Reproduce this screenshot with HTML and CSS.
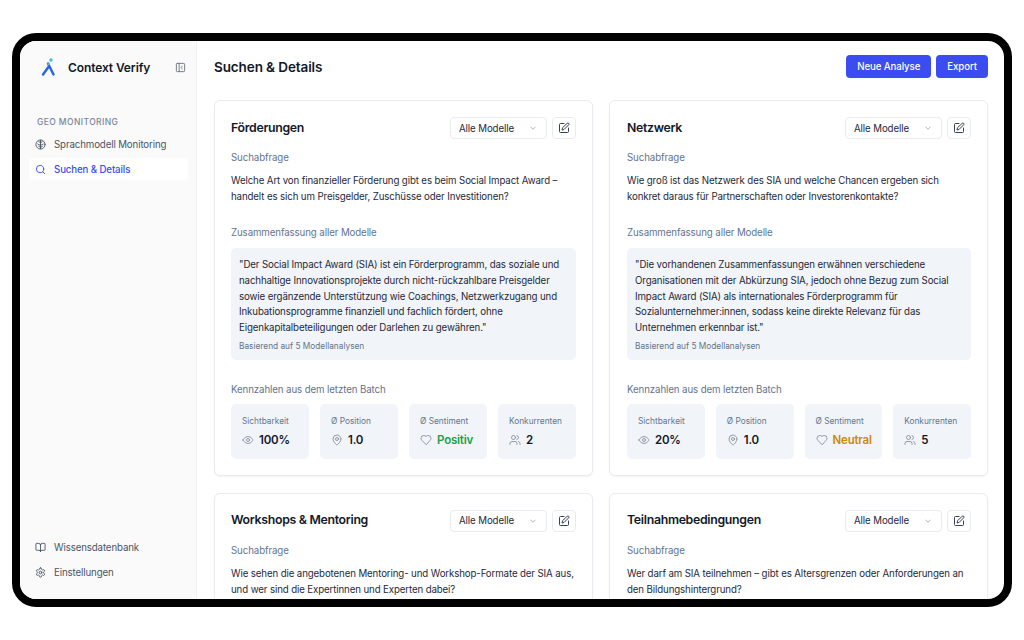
FILE: index.html
```html
<!DOCTYPE html>
<html lang="de">
<head>
  <meta charset="UTF-8" />
  <title>Context Verify</title>
  <link rel="stylesheet" href="styles.css">
</head>
<body>
  <div class="device">
    <aside class="sidebar">
      <div class="brand">
        <svg class="logo" viewBox="0 0 15 18" width="15" height="18">
          <path d="M7 5.500 L12.500 16.500 M7.800 8.500 L2 16.500" fill="none" stroke="#2563eb" stroke-width="2.400" stroke-linecap="round"/>
          <path d="M7 4.500 L8.300 7" fill="none" stroke="#60a5fa" stroke-width="2"/>
          <circle cx="10" cy="2" r="1.700" fill="#38bdf8"/>
        </svg>
        <span class="brand-name">Context Verify</span>
        <svg class="icon collapse" viewBox="0 0 24 24"><rect x="3" y="3" width="18" height="18" rx="2"/><path d="M9 3v18M16 15l-3-3 3-3"/></svg>
      </div>
      <div class="nav-title">GEO MONITORING</div>
      <nav class="nav">
        <a class="nav-item">
          <svg class="icon" viewBox="0 0 24 24"><circle cx="12" cy="12" r="10"/><path d="M12 3v18M12 8 8 6M12 8l4-2M12 14l-6-3M12 14l6-3M12 18l-4-2M12 18l4-2"/></svg>
          Sprachmodell Monitoring
        </a>
        <a class="nav-item active">
          <svg class="icon" viewBox="0 0 24 24"><circle cx="11" cy="11" r="8"/><path d="m21 21-4.300-4.300"/></svg>
          Suchen &amp; Details
        </a>
      </nav>
      <nav class="nav nav-bottom">
        <a class="nav-item">
          <svg class="icon" viewBox="0 0 24 24"><path d="M12 7v14M3 18a1 1 0 0 1-1-1V4a1 1 0 0 1 1-1h5a4 4 0 0 1 4 4 4 4 0 0 1 4-4h5a1 1 0 0 1 1 1v13a1 1 0 0 1-1 1h-6a3 3 0 0 0-3 3 3 3 0 0 0-3-3z"/></svg>
          Wissensdatenbank
        </a>
        <a class="nav-item">
          <svg class="icon" viewBox="0 0 24 24"><path d="M12.220 2h-.44a2 2 0 0 0-2 2v.18a2 2 0 0 1-1 1.730l-.43.25a2 2 0 0 1-2 0l-.15-.08a2 2 0 0 0-2.730.73l-.22.38a2 2 0 0 0 .73 2.730l.15.1a2 2 0 0 1 1 1.720v.51a2 2 0 0 1-1 1.740l-.15.09a2 2 0 0 0-.73 2.730l.22.38a2 2 0 0 0 2.730.73l.15-.08a2 2 0 0 1 2 0l.43.25a2 2 0 0 1 1 1.730V20a2 2 0 0 0 2 2h.44a2 2 0 0 0 2-2v-.18a2 2 0 0 1 1-1.730l.43-.25a2 2 0 0 1 2 0l.15.08a2 2 0 0 0 2.730-.73l.22-.39a2 2 0 0 0-.73-2.730l-.15-.08a2 2 0 0 1-1-1.740v-.5a2 2 0 0 1 1-1.740l.15-.09a2 2 0 0 0 .73-2.730l-.22-.38a2 2 0 0 0-2.730-.73l-.15.08a2 2 0 0 1-2 0l-.43-.25a2 2 0 0 1-1-1.730V4a2 2 0 0 0-2-2z"/><circle cx="12" cy="12" r="3"/></svg>
          Einstellungen
        </a>
      </nav>
    </aside>

    <main class="main">
      <header class="topbar">
        <h1>Suchen &amp; Details</h1>
        <div class="actions">
          <button class="btn">Neue Analyse</button>
          <button class="btn">Export</button>
        </div>
      </header>

      <div class="grid">
        <section class="card">
          <div class="card-head">
            <h2>Förderungen</h2>
            <div class="select">Alle Modelle<svg class="chev" viewBox="0 0 24 24"><path d="m6 9 6 6 6-6"/></svg></div>
            <button class="edit"><svg class="icon" viewBox="0 0 24 24"><path d="M12 3H5a2 2 0 0 0-2 2v14a2 2 0 0 0 2 2h14a2 2 0 0 0 2-2v-7"/><path d="M18.400 2.600a2.100 2.100 0 0 1 3 3L12 15l-4 1 1-4z"/></svg></button>
          </div>
          <div class="label">Suchabfrage</div>
          <p class="query">Welche Art von finanzieller Förderung gibt es beim Social Impact Award – handelt es sich um Preisgelder, Zuschüsse oder Investitionen?</p>
          <div class="label">Zusammenfassung aller Modelle</div>
          <div class="summary">
            <p>"Der Social Impact Award (SIA) ist ein Förderprogramm, das soziale und nachhaltige Innovationsprojekte durch nicht-rückzahlbare Preisgelder sowie ergänzende Unterstützung wie Coachings, Netzwerkzugang und Inkubationsprogramme finanziell und fachlich fördert, ohne Eigenkapitalbeteiligungen oder Darlehen zu gewähren."</p>
            <small>Basierend auf 5 Modellanalysen</small>
          </div>
          <div class="label">Kennzahlen aus dem letzten Batch</div>
          <div class="stats">
            <div class="stat"><span>Sichtbarkeit</span><b><svg class="icon" viewBox="0 0 24 24"><path d="M2 12s3.500-7 10-7 10 7 10 7-3.500 7-10 7-10-7-10-7z"/><circle cx="12" cy="12" r="3"/></svg>100%</b></div>
            <div class="stat"><span>Ø Position</span><b><svg class="icon" viewBox="0 0 24 24"><path d="M20 10c0 5-5.500 10.200-7.400 11.800a1 1 0 0 1-1.200 0C9.500 20.200 4 15 4 10a8 8 0 0 1 16 0"/><circle cx="12" cy="10" r="3"/></svg>1.0</b></div>
            <div class="stat"><span>Ø Sentiment</span><b class="green"><svg class="icon" viewBox="0 0 24 24"><path d="M19 14c1.500-1.500 3-3.200 3-5.500A5.500 5.500 0 0 0 16.500 3c-1.800 0-3 .5-4.500 2-1.500-1.500-2.700-2-4.500-2A5.500 5.500 0 0 0 2 8.500c0 2.300 1.500 4 3 5.500l7 7z"/></svg>Positiv</b></div>
            <div class="stat"><span>Konkurrenten</span><b><svg class="icon" viewBox="0 0 24 24"><path d="M16 21v-2a4 4 0 0 0-4-4H6a4 4 0 0 0-4 4v2"/><circle cx="9" cy="7" r="4"/><path d="M22 21v-2a4 4 0 0 0-3-3.900M16 3.100a4 4 0 0 1 0 7.800"/></svg>2</b></div>
          </div>
        </section>

        <section class="card">
          <div class="card-head">
            <h2>Netzwerk</h2>
            <div class="select">Alle Modelle<svg class="chev" viewBox="0 0 24 24"><path d="m6 9 6 6 6-6"/></svg></div>
            <button class="edit"><svg class="icon" viewBox="0 0 24 24"><path d="M12 3H5a2 2 0 0 0-2 2v14a2 2 0 0 0 2 2h14a2 2 0 0 0 2-2v-7"/><path d="M18.400 2.600a2.100 2.100 0 0 1 3 3L12 15l-4 1 1-4z"/></svg></button>
          </div>
          <div class="label">Suchabfrage</div>
          <p class="query">Wie groß ist das Netzwerk des SIA und welche Chancen ergeben sich konkret daraus für Partnerschaften oder Investorenkontakte?</p>
          <div class="label">Zusammenfassung aller Modelle</div>
          <div class="summary">
            <p>"Die vorhandenen Zusammenfassungen erwähnen verschiedene Organisationen mit der Abkürzung SIA, jedoch ohne Bezug zum Social Impact Award (SIA) als internationales Förderprogramm für Sozialunternehmer:innen, sodass keine direkte Relevanz für das Unternehmen erkennbar ist."</p>
            <small>Basierend auf 5 Modellanalysen</small>
          </div>
          <div class="label">Kennzahlen aus dem letzten Batch</div>
          <div class="stats">
            <div class="stat"><span>Sichtbarkeit</span><b><svg class="icon" viewBox="0 0 24 24"><path d="M2 12s3.500-7 10-7 10 7 10 7-3.500 7-10 7-10-7-10-7z"/><circle cx="12" cy="12" r="3"/></svg>20%</b></div>
            <div class="stat"><span>Ø Position</span><b><svg class="icon" viewBox="0 0 24 24"><path d="M20 10c0 5-5.500 10.200-7.400 11.800a1 1 0 0 1-1.200 0C9.500 20.200 4 15 4 10a8 8 0 0 1 16 0"/><circle cx="12" cy="10" r="3"/></svg>1.0</b></div>
            <div class="stat"><span>Ø Sentiment</span><b class="amber"><svg class="icon" viewBox="0 0 24 24"><path d="M19 14c1.500-1.500 3-3.200 3-5.500A5.500 5.500 0 0 0 16.500 3c-1.800 0-3 .5-4.500 2-1.500-1.500-2.700-2-4.500-2A5.500 5.500 0 0 0 2 8.500c0 2.300 1.500 4 3 5.500l7 7z"/></svg>Neutral</b></div>
            <div class="stat"><span>Konkurrenten</span><b><svg class="icon" viewBox="0 0 24 24"><path d="M16 21v-2a4 4 0 0 0-4-4H6a4 4 0 0 0-4 4v2"/><circle cx="9" cy="7" r="4"/><path d="M22 21v-2a4 4 0 0 0-3-3.900M16 3.100a4 4 0 0 1 0 7.800"/></svg>5</b></div>
          </div>
        </section>

        <section class="card">
          <div class="card-head">
            <h2>Workshops &amp; Mentoring</h2>
            <div class="select">Alle Modelle<svg class="chev" viewBox="0 0 24 24"><path d="m6 9 6 6 6-6"/></svg></div>
            <button class="edit"><svg class="icon" viewBox="0 0 24 24"><path d="M12 3H5a2 2 0 0 0-2 2v14a2 2 0 0 0 2 2h14a2 2 0 0 0 2-2v-7"/><path d="M18.400 2.600a2.100 2.100 0 0 1 3 3L12 15l-4 1 1-4z"/></svg></button>
          </div>
          <div class="label">Suchabfrage</div>
          <p class="query">Wie sehen die angebotenen Mentoring- und Workshop-Formate der SIA aus, und wer sind die Expertinnen und Experten dabei?</p>
        </section>

        <section class="card">
          <div class="card-head">
            <h2>Teilnahmebedingungen</h2>
            <div class="select">Alle Modelle<svg class="chev" viewBox="0 0 24 24"><path d="m6 9 6 6 6-6"/></svg></div>
            <button class="edit"><svg class="icon" viewBox="0 0 24 24"><path d="M12 3H5a2 2 0 0 0-2 2v14a2 2 0 0 0 2 2h14a2 2 0 0 0 2-2v-7"/><path d="M18.400 2.600a2.100 2.100 0 0 1 3 3L12 15l-4 1 1-4z"/></svg></button>
          </div>
          <div class="label">Suchabfrage</div>
          <p class="query">Wer darf am SIA teilnehmen – gibt es Altersgrenzen oder Anforderungen an den Bildungshintergrund?</p>
        </section>
      </div>
    </main>
  </div>
</body>
</html>
```
FILE: styles.css
```css
* {
  box-sizing: border-box;
}
html, body {
  height: 100%;
}
body {
  margin: 0;
  padding: 33px 12px;
  background: white;
  color: #111827;
  font-family: Inter, "Liberation Sans", sans-serif;
  overflow: hidden;
}
.device {
  height: 574px;
  display: flex;
  border: 8px solid black;
  border-radius: 24px;
  background: white;
  overflow: hidden;
}
.icon {
  width: 12px;
  height: 12px;
  fill: none;
  stroke: currentColor;
  stroke-width: 2;
  stroke-linecap: round;
  stroke-linejoin: round;
  flex: none;
}

/* sidebar */
.sidebar {
  width: 177px;
  flex: none;
  display: flex;
  flex-direction: column;
  background: #fafafa;
  border-right: 1px solid #f0f1f4;
  padding: 0 8px 16px 9px;
}
.brand {
  display: flex;
  align-items: center;
  height: 52px;
  padding-left: 12px;
}
.logo {
  flex: none;
}
.brand-name {
  margin-left: 12px;
  font-size: 12px;
  font-weight: 600;
  letter-spacing: -0.1px;
  color: #111827;
}
.collapse {
  margin-left: auto;
  margin-right: 2px;
  color: #6b7280;
  width: 11px;
  height: 11px;
}
.nav-title {
  margin-top: 24px;
  padding-left: 8px;
  font-size: 8.500px;
  font-weight: 500;
  letter-spacing: 0.4px;
  color: #7a869a;
}
.nav {
  margin-top: 6px;
  display: flex;
  flex-direction: column;
  gap: 3px;
}
.nav-bottom {
  margin-top: auto;
}
.nav-item {
  display: flex;
  align-items: center;
  gap: 8px;
  height: 22px;
  padding-left: 6px;
  border-radius: 4px;
  font-size: 9.700px;
  letter-spacing: -0.12px;
  color: #4b5563;
}
.nav-item .icon {
  width: 11px;
  height: 11px;
}
.nav-item.active {
  background: white;
  color: #3b4cf0;
  font-weight: 500;
}

/* main */
.main {
  flex: 1;
  min-width: 0;
  padding: 0 16px 0 17px;
  overflow: hidden;
}
.topbar {
  display: flex;
  align-items: center;
  justify-content: space-between;
  height: 51px;
  margin-bottom: 8px;
}
h1 {
  margin: 0;
  font-size: 13.500px;
  font-weight: 600;
  letter-spacing: -0.1px;
}
.actions {
  display: flex;
  gap: 5px;
}
.btn {
  height: 23px;
  padding: 0 11px;
  border: none;
  border-radius: 4px;
  background: #3b4cf0;
  color: white;
  font: 500 9.700px Inter, "Liberation Sans", sans-serif;
  letter-spacing: -0.1px;
}
.grid {
  display: grid;
  grid-template-columns: 379px 379px;
  gap: 17px 16px;
}
.card {
  border: 1px solid #e8ebf0;
  border-radius: 6px;
  padding: 16px;
  background: white;
  box-shadow: 0 1px 2px rgba(15, 23, 42, 0.05);
}
.card:nth-child(even) {
  padding-left: 17px;
}
.card-head {
  display: flex;
  align-items: center;
  gap: 5px;
  height: 22px;
}
h2 {
  margin: 0 auto 2px 0;
  font-size: 12.300px;
  font-weight: 600;
  letter-spacing: -0.3px;
}
.select {
  display: flex;
  align-items: center;
  justify-content: space-between;
  width: 97px;
  height: 22px;
  padding: 0 8px;
  border: 1px solid #e8ebf0;
  border-radius: 4px;
  font-size: 9.700px;
  letter-spacing: -0.1px;
  color: #1f2937;
}
.chev {
  width: 10px;
  height: 10px;
  fill: none;
  stroke: #9ca3af;
  stroke-width: 2;
}
.edit {
  width: 24px;
  height: 22px;
  padding: 0;
  display: flex;
  align-items: center;
  justify-content: center;
  border: 1px solid #e8ebf0;
  border-radius: 4px;
  background: white;
  color: #374151;
}
.label {
  margin-top: 11px;
  font-size: 9.700px;
  letter-spacing: -0.1px;
  line-height: 16px;
  color: #64748b;
}
.query {
  margin: 7px 0 20px;
  font-size: 9.700px;
  letter-spacing: -0.12px;
  line-height: 16px;
  color: #1f2937;
}
.query + .label {
  margin-top: 0;
}
.summary {
  margin-top: 7px;
  padding: 9px 8px 8px;
  border-radius: 5px;
  background: #f1f4f9;
}
.summary p {
  margin: 0;
  font-size: 9.700px;
  letter-spacing: -0.12px;
  line-height: 15.800px;
  color: #1f2937;
}
.summary small {
  display: block;
  margin-top: 4px;
  font-size: 8.300px;
  line-height: 12px;
  color: #64748b;
}
.summary + .label {
  margin-top: 22px;
}
.stats {
  margin-top: 6px;
  display: grid;
  grid-template-columns: repeat(4, minmax(0, 1fr));
  gap: 11px;
}
.stat {
  height: 55px;
  padding: 11px 11px 0;
  border-radius: 5px;
  background: #f1f4f9;
}
.stat span {
  display: block;
  font-size: 8.300px;
  line-height: 12px;
  color: #64748b;
}
.stat b {
  display: flex;
  align-items: center;
  gap: 5px;
  margin-top: 6px;
  font-size: 11.500px;
  font-weight: 600;
  letter-spacing: -0.2px;
  color: #111827;
}
.stat .icon {
  color: #7b8494;
  stroke-width: 1.600;
}
.green {
  color: #16a34a !important;
}
.amber {
  color: #ca8a04 !important;
}
```
